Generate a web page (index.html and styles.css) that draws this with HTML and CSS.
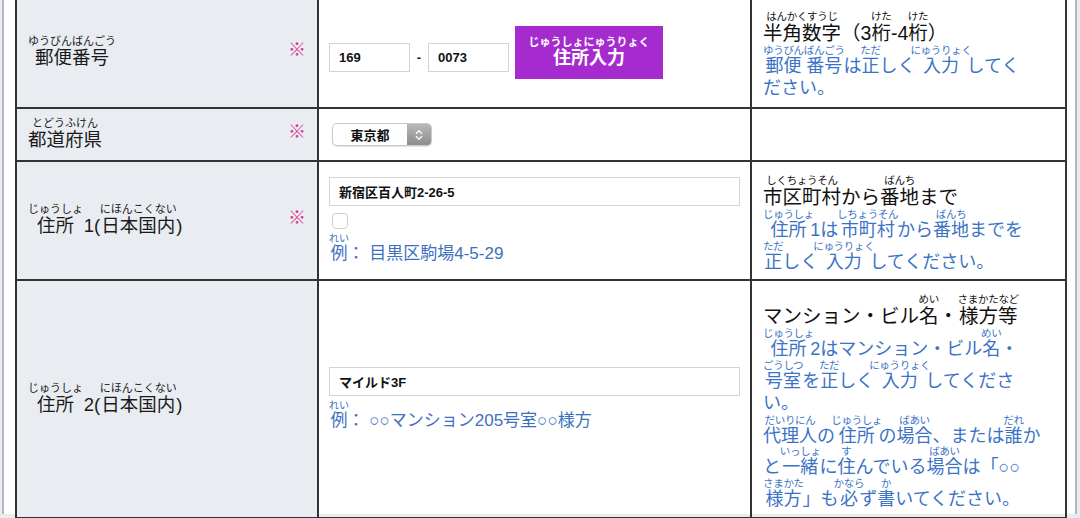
FILE: index.html
```html
<!DOCTYPE html>
<html lang="ja">
<head>
<meta charset="utf-8">
<title>住所入力フォーム</title>
<link rel="stylesheet" href="styles.css">
</head>
<body>
<div class="frame">
<table class="form">
<colgroup><col class="c-label"><col class="c-field"><col class="c-note"></colgroup>
<tr class="r1">
  <th class="label"><div class="label-in"><span class="lbl"><ruby>郵便番号<rt>ゆうびんばんごう</rt></ruby></span><span class="req">※</span></div></th>
  <td class="field">
    <div class="zip">
      <input class="txt zip-in" type="text" value="169">
      <span class="dash">-</span>
      <input class="txt zip-in" type="text" value="0073">
      <button class="addr-btn" type="button"><ruby>住所入力<rt>じゅうしょにゅうりょく</rt></ruby></button>
    </div>
  </td>
  <td class="note">
    <p class="note-head"><ruby>半角数字<rt>はんかくすうじ</rt></ruby>（3<ruby>桁<rt>けた</rt></ruby>-4<ruby>桁<rt>けた</rt></ruby>）</p>
    <p class="note-blue"><ruby>郵便<rt>ゆうびん</rt></ruby><ruby>番号<rt>ばんごう</rt></ruby>は<ruby>正<rt>ただ</rt></ruby>しく<ruby>入力<rt>にゅうりょく</rt></ruby>してく<br>ださい。</p>
  </td>
</tr>
<tr class="r2">
  <th class="label"><div class="label-in"><span class="lbl"><ruby>都道府県<rt>とどうふけん</rt></ruby></span><span class="req">※</span></div></th>
  <td class="field">
    <div class="pref"><span class="pref-val">東京都</span><span class="pref-arrow"><svg width="10" height="14" viewBox="0 0 10 14"><path d="M2.2 5.6 L5 2.8 L7.8 5.6 M2.2 8.4 L5 11.2 L7.8 8.4" fill="none" stroke="#fff" stroke-width="1.3" stroke-linecap="round" stroke-linejoin="round"/></svg></span></div>
  </td>
  <td class="note"></td>
</tr>
<tr class="r3">
  <th class="label"><div class="label-in"><span class="lbl"><ruby>住所<rt>じゅうしょ</rt></ruby> 1(<ruby>日本国内<rt>にほんこくない</rt></ruby>)</span><span class="req">※</span></div></th>
  <td class="field">
    <input class="txt wide" type="text" value="新宿区百人町2-26-5">
    <input class="chk" type="checkbox">
    <div class="example"><ruby>例<rt>れい</rt></ruby>： 目黒区駒場4-5-29</div>
  </td>
  <td class="note">
    <p class="note-head"><ruby>市区町村<rt>しくちょうそん</rt></ruby>から<ruby>番地<rt>ばんち</rt></ruby>まで</p>
    <p class="note-blue"><ruby>住所<rt>じゅうしょ</rt></ruby>1は<ruby>市町村<rt>しちょうそん</rt></ruby>から<ruby>番地<rt>ばんち</rt></ruby>までを<br><ruby>正<rt>ただ</rt></ruby>しく<ruby>入力<rt>にゅうりょく</rt></ruby>してください。</p>
  </td>
</tr>
<tr class="r4">
  <th class="label"><div class="label-in"><span class="lbl"><ruby>住所<rt>じゅうしょ</rt></ruby> 2(<ruby>日本国内<rt>にほんこくない</rt></ruby>)</span></div></th>
  <td class="field">
    <input class="txt wide" type="text" value="マイルド3F">
    <div class="example ex2"><ruby>例<rt>れい</rt></ruby>： ○○マンション205号室○○様方</div>
  </td>
  <td class="note">
    <p class="note-head">マンション・ビル<ruby>名<rt>めい</rt></ruby>・<ruby>様方等<rt>さまかたなど</rt></ruby></p>
    <p class="note-blue"><ruby>住所<rt>じゅうしょ</rt></ruby>2はマンション・ビル<ruby>名<rt>めい</rt></ruby>・<br><ruby>号室<rt>ごうしつ</rt></ruby>を<ruby>正<rt>ただ</rt></ruby>しく<ruby>入力<rt>にゅうりょく</rt></ruby>してくださ<br>い。</p>
    <p class="note-blue"><ruby>代理人<rt>だいりにん</rt></ruby>の<ruby>住所<rt>じゅうしょ</rt></ruby>の<ruby>場合<rt>ばあい</rt></ruby>、または<ruby>誰<rt>だれ</rt></ruby>か<br>と<ruby>一緒<rt>いっしょ</rt></ruby>に<ruby>住<rt>す</rt></ruby>んでいる<ruby>場合<rt>ばあい</rt></ruby>は「○○<br><ruby>様方<rt>さまかた</rt></ruby>」も<ruby>必<rt>かなら</rt></ruby>ず<ruby>書<rt>か</rt></ruby>いてください。</p>
  </td>
</tr>
</table>
</div>
</body>
</html>
```

FILE: styles.css
```css
* { box-sizing: border-box; }
html, body { margin: 0; padding: 0; }
body {
  width: 1080px;
  height: 518px;
  overflow: hidden;
  background: #ebebeb;
  font-family: "Liberation Sans", "Noto Sans CJK JP", sans-serif;
  color: #1a1a1a;
}
.frame {
  margin: 0 3px 0 2px;
  height: 518px;
  background: #fff;
  border-left: 2px solid #aeb8ca;
  border-right: 2px solid #aeb8ca;
  padding: 0 10px 0 11px;
}
.form {
  width: 1050px;
  table-layout: fixed;
  border-collapse: collapse;
  margin-top: -4px;
  border: 2px solid #333;
}
.label, .field, .note {
  border: 2px solid #333;
}
.c-label { width: 302px; }
.c-field { width: 433px; }
.c-note { width: 315px; }
.r1 { height: 111px; }
.r2 { height: 53px; }
.r3 { height: 119px; }
.r4 { height: 238px; }

ruby { ruby-align: center; ruby-position: over; }
rt { font-size: 11px; line-height: 1; }

.label {
  background: #e9edf2;
  font-weight: normal;
  text-align: left;
  vertical-align: middle;
  padding: 0 11px;
}
.label-in {
  display: flex;
  align-items: center;
  justify-content: space-between;
}
.lbl { font-size: 18.5px; line-height: 1.2; color: #1a1a1a; }
.req {
  color: #e0379a;
  font-family: "Noto Sans CJK JP", sans-serif;
  font-size: 18px;
  font-weight: bold;
  margin-bottom: 10px;
}

.field { vertical-align: middle; padding: 0 10px; }
.zip { display: flex; align-items: flex-start; }
.txt {
  display: block;
  height: 29px;
  border: 1px solid #d3d3d3;
  border-radius: 0;
  background: #fff;
  padding: 0 9px;
  font: bold 13px "Liberation Sans", "Noto Sans CJK JP", sans-serif;
  color: #111;
  outline: none;
}
.zip-in { width: 81px; margin-top: 17px; }
.dash {
  width: 18px;
  margin-top: 17px;
  line-height: 29px;
  text-align: center;
  font-size: 13px;
  font-weight: bold;
}
.addr-btn {
  margin-left: 6px;
  width: 148px;
  height: 53px;
  border: none;
  padding: 0;
  background: #a62bcf;
  color: #fff;
  font-family: "Liberation Sans", "Noto Sans CJK JP", sans-serif;
  font-size: 18px;
  font-weight: bold;
  line-height: 1.1;
}
.addr-btn rt { font-size: 11px; font-weight: bold; }

.pref {
  display: flex;
  width: 100px;
  height: 23px;
  margin-left: 3px;
  border: 1px solid #c9c9c9;
  border-radius: 5px;
  background: #fff;
  box-shadow: 0 1px 1px rgba(0,0,0,0.12);
  overflow: hidden;
}
.pref-val {
  flex: 1;
  display: flex;
  align-items: center;
  justify-content: center;
  font-size: 13px;
  font-weight: bold;
  color: #111;
}
.pref-arrow {
  width: 24px;
  display: flex;
  align-items: center;
  justify-content: center;
  background: linear-gradient(#b9b9b9, #8c8c8c);
}

.wide { width: 100%; }
.chk {
  display: block;
  appearance: none;
  -webkit-appearance: none;
  width: 16px;
  height: 16px;
  margin: 7px 0 0 3px;
  border: 1px solid #cfcfcf;
  border-radius: 4px;
  background: #fff;
}
.example {
  margin-top: 4px;
  font-size: 17px;
  line-height: 1.15;
  color: #3d70c0;
}
.example rt { font-size: 10px; }
.ex2 { margin-top: 4px; }

.note { vertical-align: top; padding: 12px 4px 0 11px; }
.note p { margin: 0; font-size: 18px; line-height: 22px; }
.note rt { font-size: 10.5px; letter-spacing: -0.3px; }
.note-head { color: #111; font-size: 19.5px !important; }
.note-blue { color: #3b73c6; }
```
